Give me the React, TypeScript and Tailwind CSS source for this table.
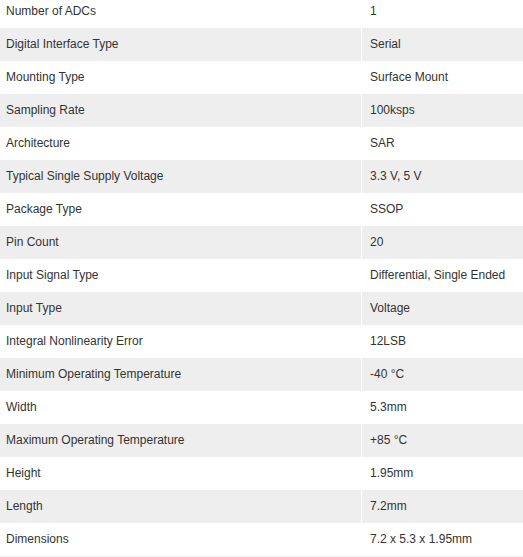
import React from "react";

const rows: [string, string][] = [
  ["Number of ADCs", "1"],
  ["Digital Interface Type", "Serial"],
  ["Mounting Type", "Surface Mount"],
  ["Sampling Rate", "100ksps"],
  ["Architecture", "SAR"],
  ["Typical Single Supply Voltage", "3.3 V, 5 V"],
  ["Package Type", "SSOP"],
  ["Pin Count", "20"],
  ["Input Signal Type", "Differential, Single Ended"],
  ["Input Type", "Voltage"],
  ["Integral Nonlinearity Error", "12LSB"],
  ["Minimum Operating Temperature", "-40 °C"],
  ["Width", "5.3mm"],
  ["Maximum Operating Temperature", "+85 °C"],
  ["Height", "1.95mm"],
  ["Length", "7.2mm"],
  ["Dimensions", "7.2 x 5.3 x 1.95mm"],
];

export default function App() {
  return (
    <div className="w-[523px] h-[557px] overflow-hidden bg-white">
      <div
        className="-mt-[5px] border-b border-[#eeeeee] text-[12px] text-[#333333]"
        style={{ fontFamily: '"Liberation Sans", Arial, sans-serif' }}
      >
        {rows.map(([k, v], i) => (
          <div
            key={k}
            className={`flex h-[33px] items-center ${i % 2 === 1 ? "bg-[#eeeeee]" : "bg-white"}`}
          >
            <div className="w-[362px] shrink-0 h-full flex items-center pl-[6px] border-r border-white">
              <span className="-mt-[2px]">{k}</span>
            </div>
            <div className="flex-1 h-full flex items-center pl-[8px]">
              <span className="-mt-[2px]">{v}</span>
            </div>
          </div>
        ))}
      </div>
    </div>
  );
}
